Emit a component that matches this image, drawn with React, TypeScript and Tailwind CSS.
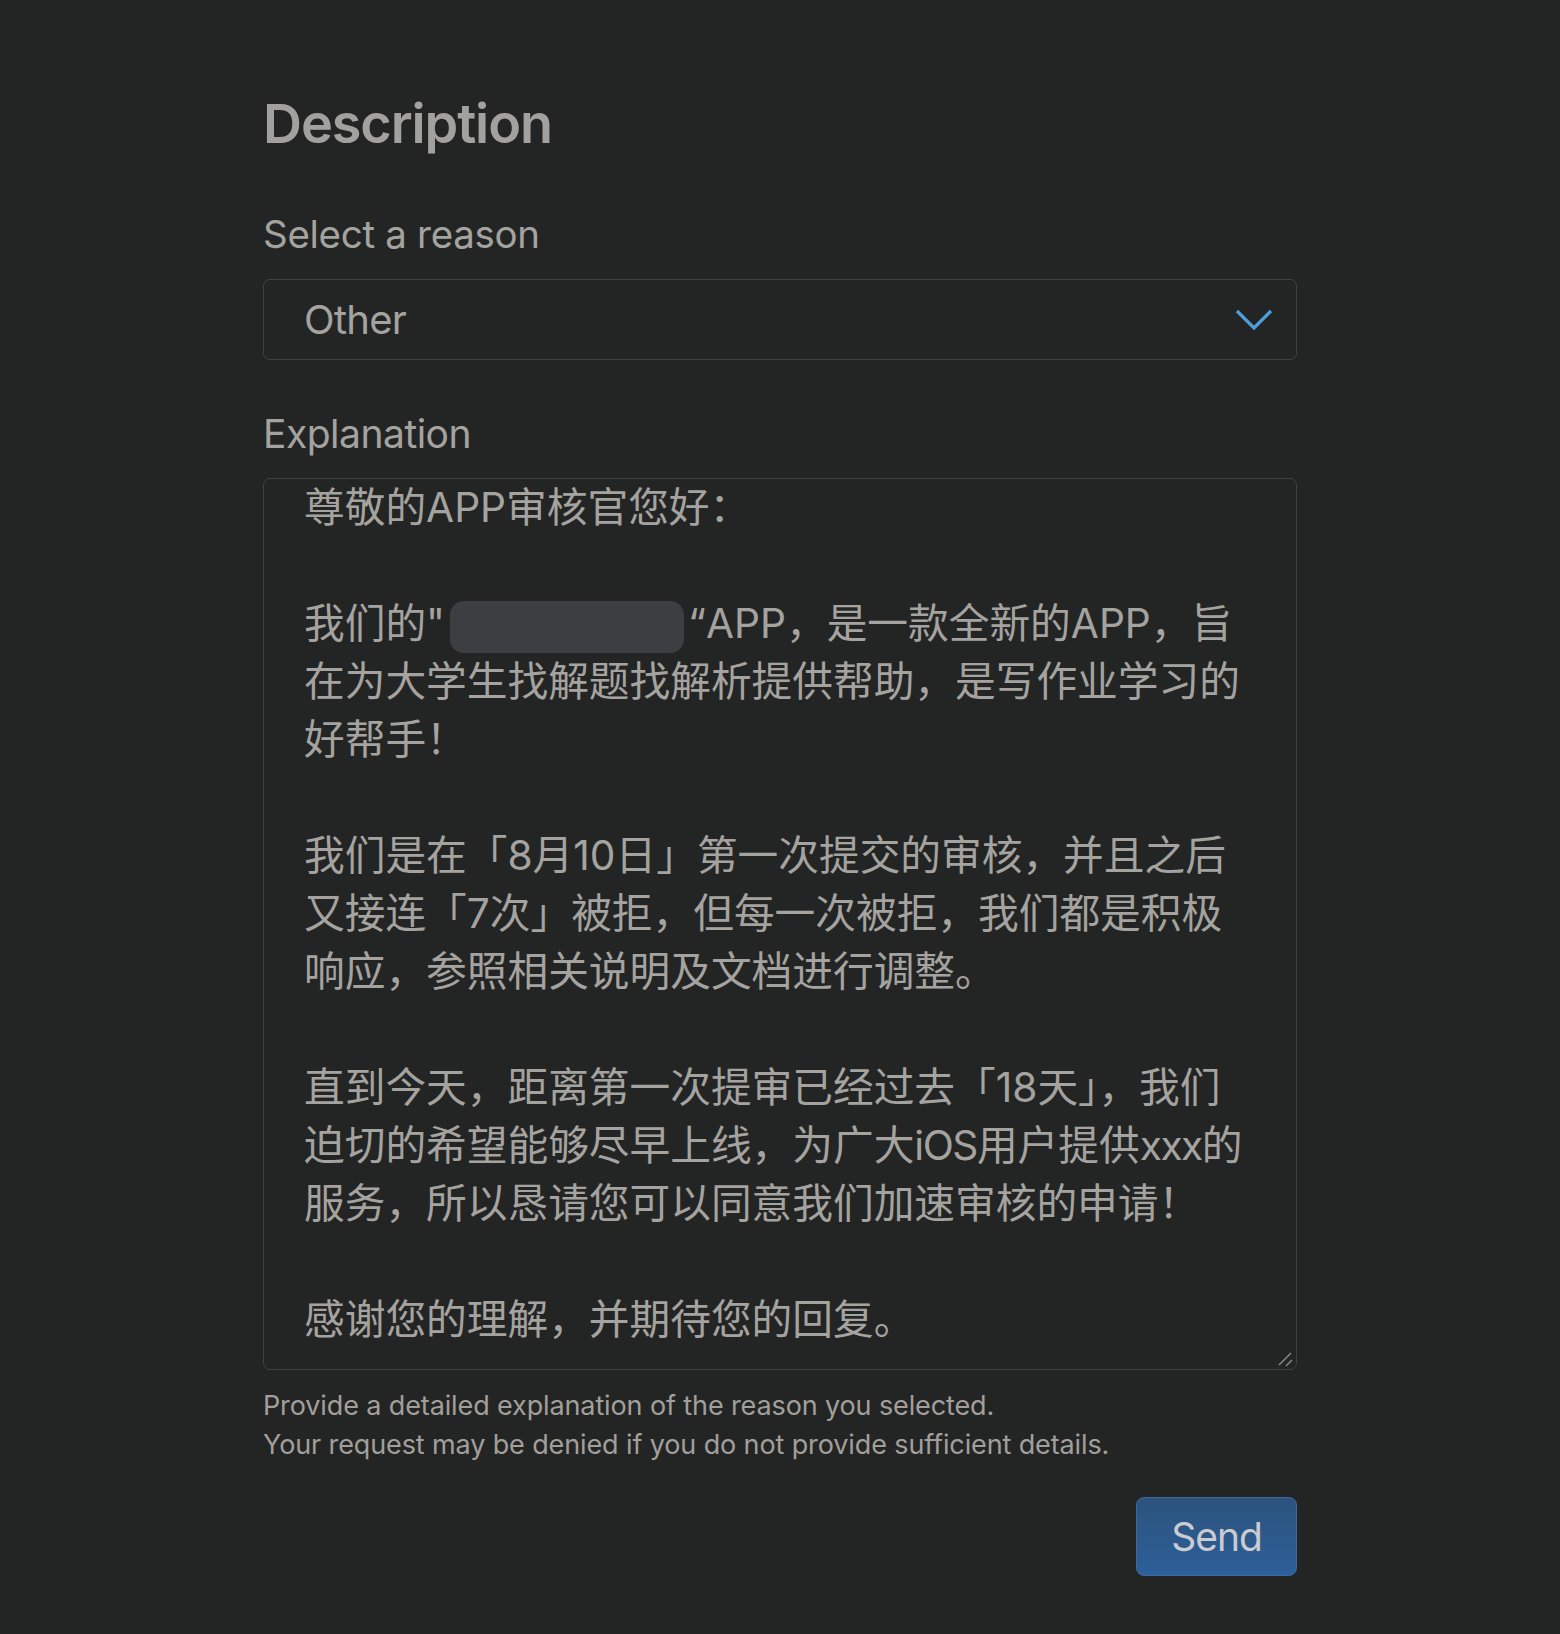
import React from 'react';

const latin = "font-['Inter','Noto_Sans_CJK_SC',sans-serif]";

const lines: (string | null)[] = [
  '尊敬的APP审核官您好：',
  null,
  'REDACTED',
  '在为大学生找解题找解析提供帮助，是写作业学习的',
  '好帮手！',
  null,
  '我们是在「8月10日」第一次提交的审核，并且之后',
  '又接连「7次」被拒，但每一次被拒，我们都是积极',
  '响应，参照相关说明及文档进行调整。',
  null,
  '直到今天，距离第一次提审已经过去「18天」，我们',
  'IOS_LINE',
  '服务，所以恳请您可以同意我们加速审核的申请！',
  null,
  '感谢您的理解，并期待您的回复。',
];

const ExplanationBox: React.FC = () => {
  return (
    <div className="relative mt-[21px] h-[892px] overflow-hidden rounded-[7px] border border-[#3f4040] bg-[#232525] pl-[40px] text-[40.7px] text-[#a5a39f]">
      {lines.map((line, i) => {
        if (line === null) return <div key={i} className="h-[58px]" />;
        if (line === 'REDACTED') {
          return (
            <div key={i} className="h-[58px] whitespace-nowrap leading-[58px]">
              我们的"
              <span className="ml-[5px] mr-[4px] inline-block h-[52px] w-[234px] rounded-[14px] bg-[#3c3f41] align-middle" />
              “APP，是一款全新的APP，旨
            </div>
          );
        }
        if (line === 'IOS_LINE') {
          return (
            <div key={i} className="h-[58px] whitespace-nowrap leading-[58px]">
              迫切的希望能够尽早上线，为广大<span className="tracking-[-1.5px]">iOS</span>用户提供
              <span className="tracking-[-1.5px]">xxx</span>的
            </div>
          );
        }
        return (
          <div key={i} className="h-[58px] whitespace-nowrap leading-[58px]">
            {line}
          </div>
        );
      })}
      <svg
        className="absolute bottom-[2px] right-[3px]"
        width="16"
        height="16"
        viewBox="0 0 16 16"
      >
        <line x1="2" y1="14" x2="14" y2="2" stroke="#8a8a8a" strokeWidth="1.5" />
        <line x1="9" y1="15" x2="15" y2="9" stroke="#8a8a8a" strokeWidth="1.5" />
      </svg>
    </div>
  );
};

export default function App() {
  return (
    <div className={`min-h-[1634px] w-full bg-[#232525] ${latin}`}>
      <div className="mx-auto flex w-[1034px] flex-col pb-[58px] pt-[92px]">
        <h1 className="text-[54px] font-semibold leading-[64px] tracking-[-1.1px] text-[#a3a19d]">
          Description
        </h1>

        <label className="mt-[55px] text-[38.5px] leading-[46px] tracking-[-0.3px] text-[#a5a39f]">
          Select a reason
        </label>
        <div className="mt-[22px] flex h-[81px] items-center justify-between rounded-[7px] border border-[#3f4040] bg-[#232525] pl-[40px] pr-[23px]">
          <span className="text-[40px] leading-[48px] tracking-[-0.7px] text-[#a5a39f]">Other</span>
          <svg width="38" height="22" viewBox="0 0 38 22" fill="none">
            <path d="M2 2 L19 19 L36 2" stroke="#4d9fd9" strokeWidth="3.2" />
          </svg>
        </div>

        <label className="mt-[51px] text-[39px] leading-[46px] tracking-[-0.5px] text-[#a5a39f]">
          Explanation
        </label>
        <ExplanationBox />

        <div className="mt-[16px] text-[27px] leading-[39px] tracking-[-0.12px] text-[#a29f9b]">
          <p>Provide a detailed explanation of the reason you selected.</p>
          <p>Your request may be denied if you do not provide sufficient details.</p>
        </div>

        <div className="mt-[33px] flex justify-end">
          <button
            type="button"
            className="h-[79px] w-[161px] rounded-[8px] border border-[#3a6aa0] bg-gradient-to-b from-[#2c537d] to-[#2d5f99] text-[39px] leading-[48px] tracking-[-1px] text-[#c9ccd0]"
          >
            Send
          </button>
        </div>
      </div>
    </div>
  );
}
